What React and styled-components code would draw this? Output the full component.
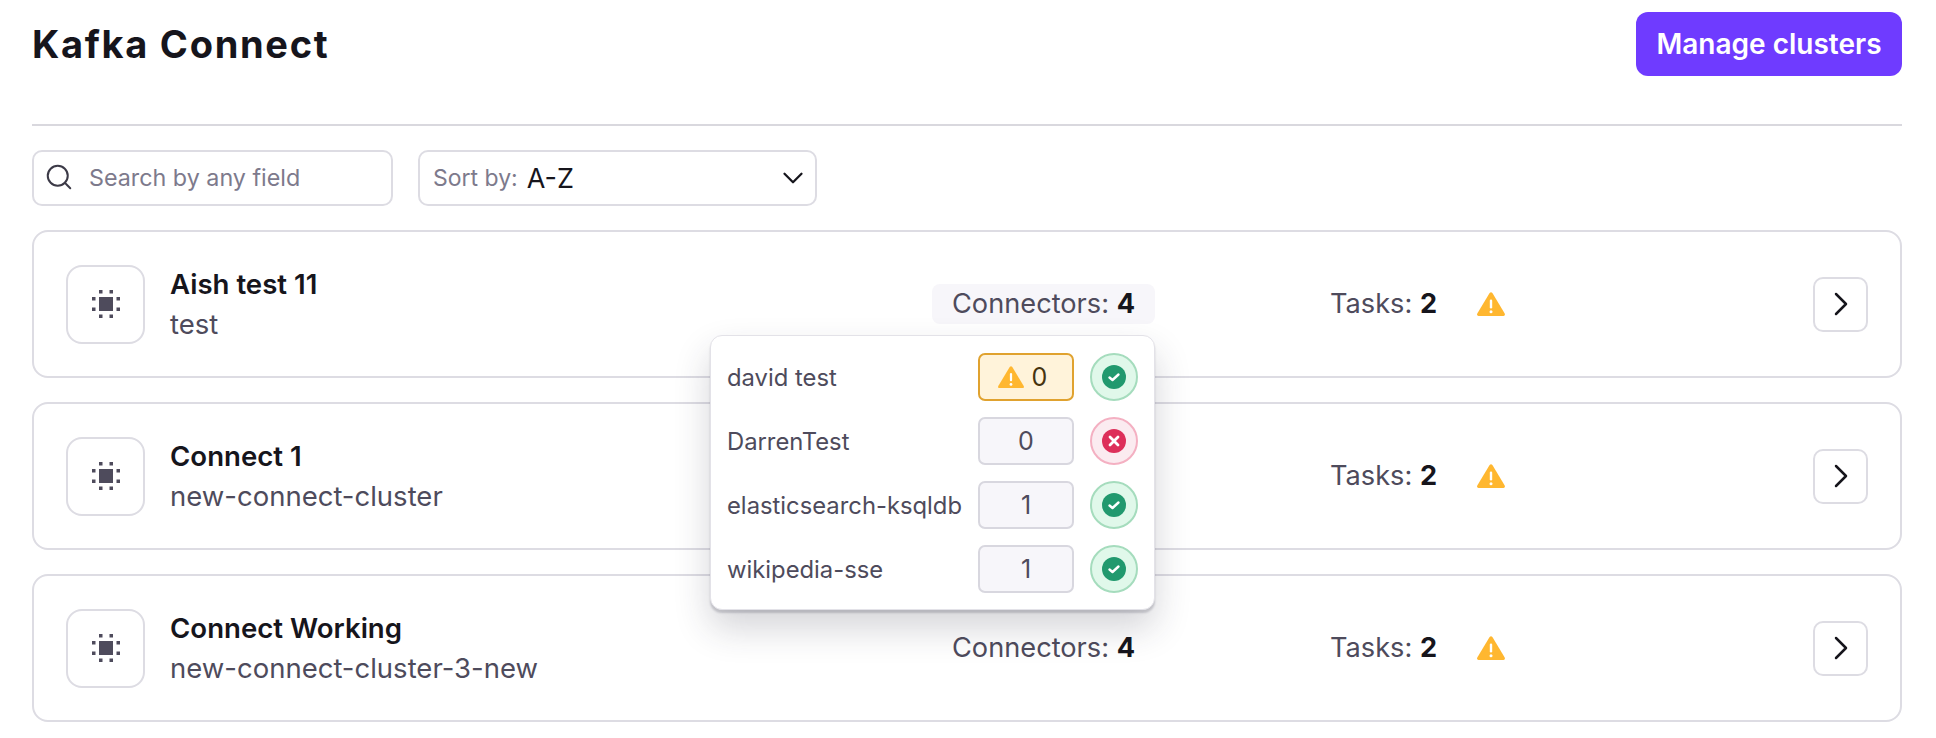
import React from 'react';
import styled, { createGlobalStyle } from 'styled-components';
import { Search, ChevronDown, ChevronRight } from 'lucide-react';

const GlobalStyle = createGlobalStyle`
    html, body {
        margin: 0;
        padding: 0;
        background: #fff;
        font-family: Inter, "Liberation Sans", sans-serif;
    }
    * {
        box-sizing: border-box;
    }
`

const Page = styled.div`
    width: 1936px;
    padding: 12px 34px 0 32px;
`

const Header = styled.div`
    display: flex;
    justify-content: space-between;
    align-items: center;
    height: 114px;
    padding-bottom: 48px;
    border-bottom: 2px solid #d9d8de;
`

const Title = styled.h1`
    margin: 0;
    font-size: 38px;
    font-weight: 700;
    letter-spacing: 1.7px;
    color: #16151c;
`

const ManageButton = styled.button`
    height: 64px;
    width: 266px;
    border: none;
    border-radius: 12px;
    background: #6f3bff;
    color: #fff;
    font-family: inherit;
    font-size: 28px;
    font-weight: 600;
`

const Toolbar = styled.div`
    display: flex;
    gap: 25px;
    margin: 24px 0 24px;
`

const SearchBox = styled.label`
    display: flex;
    align-items: center;
    gap: 15px;
    width: 361px;
    height: 56px;
    padding: 0 10px 2px;
    border: 2px solid #dddce3;
    border-radius: 10px;
    color: #3c3a47;
`

const SearchInput = styled.input`
    flex: 1;
    min-width: 0;
    padding: 0;
    border: none;
    outline: none;
    font-family: inherit;
    font-size: 23.3px;
    color: #16151c;

    &::placeholder {
        color: #7d7a8c;
        opacity: 1;
    }
`

const SortBox = styled.div`
    display: flex;
    align-items: center;
    width: 399px;
    height: 56px;
    padding: 0 5px 0 13px;
    border: 2px solid #dddce3;
    border-radius: 10px;
    font-size: 23px;
    color: #16151c;
`

const SortLabel = styled.span`
    margin-right: 9px;
    color: #7d7a8c;
`

const SortValue = styled.span`
    flex: 1;
    font-size: 27px;
`

const List = styled.div`
    display: flex;
    flex-direction: column;
    gap: 24px;
`

const Card = styled.div`
    display: grid;
    grid-template-columns: 866px 398px 1fr auto;
    align-items: center;
    height: 148px;
    padding: 0 32px;
    border: 2px solid #dddce3;
    border-radius: 16px;
`

const Identity = styled.div`
    display: flex;
    align-items: center;
    gap: 25px;
`

const IconBox = styled.div`
    display: flex;
    align-items: center;
    justify-content: center;
    width: 79px;
    height: 79px;
    border: 2px solid #dddce3;
    border-radius: 16px;
`

const Names = styled.div`
    display: flex;
    flex-direction: column;
    gap: 8px;
`

const Name = styled.div`
    font-size: 27.6px;
    font-weight: 600;
    line-height: 32px;
    color: #16151c;
`

const SubName = styled.div`
    font-size: 27.5px;
    line-height: 32px;
    color: #4e4b5c;
`

const ConnectorsCell = styled.div`
    position: relative;
    justify-self: start;
`

const Stat = styled.div`
    font-size: 27.2px;
    line-height: 40px;
    white-space: nowrap;
    color: #4e4b5c;

    b {
        font-weight: 700;
        color: #16151c;
    }
`

const ConnectorsStat = styled(Stat)`
    width: 223px;
    height: 40px;
    padding-left: 20px;
    border-radius: 8px;
    background: ${props => (props.$active ? '#f7f6fa' : 'transparent')};
`

const TasksCell = styled.div`
    display: flex;
    align-items: center;
    gap: 40px;
`

const ArrowButton = styled.button`
    display: flex;
    align-items: center;
    justify-content: center;
    width: 55px;
    height: 55px;
    padding: 0;
    border: 2px solid #dddce3;
    border-radius: 10px;
    background: #fff;
    color: #16151c;
`

const Popover = styled.div`
    position: absolute;
    top: 51px;
    right: 0;
    z-index: 2;
    display: flex;
    flex-direction: column;
    gap: 16px;
    width: 445px;
    padding: 17px 16px 16px 16px;
    border: 1px solid #e3e2e8;
    border-radius: 12px;
    background: #fff;
    box-shadow: 0 3px 2px rgba(40, 38, 60, 0.2), 0 18px 36px rgba(40, 38, 60, 0.2);
`

const PopoverRow = styled.div`
    display: flex;
    align-items: center;
    height: 48px;
`

const ConnectorName = styled.div`
    flex: 1;
    font-size: 23.8px;
    color: #4e4b5c;
`

const CountPill = styled.div`
    display: flex;
    align-items: center;
    justify-content: center;
    gap: 8px;
    width: 96px;
    height: 48px;
    margin-right: 16px;
    padding-right: ${props => (props.$warn ? '7px' : '0')};
    border: 2px solid ${props => (props.$warn ? '#e0a22f' : '#d8d7df')};
    border-radius: 7px;
    background: ${props => (props.$warn ? '#fff3da' : '#f7f6fa')};
    color: ${props => (props.$warn ? '#46330f' : '#4e4b5c')};
    font-size: 25px;
`

const StatusRing = styled.div`
    display: flex;
    align-items: center;
    justify-content: center;
    width: 48px;
    height: 48px;
    border: 2px solid ${props => (props.$ok ? '#a5dcbd' : '#f4b0c2')};
    border-radius: 50%;
    background: ${props => (props.$ok ? '#e0f8ea' : '#fbebf0')};
`

const ChipIcon = () => (
    <svg width="28" height="28" viewBox="0 0 28 28" fill="#4e4b5c">
        <rect x="7" y="7" width="14" height="14" />
        <rect x="7" y="0" width="3.500" height="3.500" />
        <rect x="17.500" y="0" width="3.500" height="3.500" />
        <rect x="7" y="24.500" width="3.500" height="3.500" />
        <rect x="17.500" y="24.500" width="3.500" height="3.500" />
        <rect x="0" y="7" width="3.500" height="3.500" />
        <rect x="0" y="17.500" width="3.500" height="3.500" />
        <rect x="24.500" y="7" width="3.500" height="3.500" />
        <rect x="24.500" y="17.500" width="3.500" height="3.500" />
    </svg>
)

const WarnIcon = ({size}) => (
    <svg width={size} height={size * 0.86} viewBox="0 0 28 24">
        <path d="M12.600 1 Q14 -0.500 15.400 1 L27.700 21.500 Q28.500 24 26 24 L2 24 Q-0.500 24 0.300 21.500 Z" fill="#ffb730" />
        <rect x="12.800" y="7.500" width="2.400" height="9" rx="1.200" fill="#fff" />
        <circle cx="14" cy="19.800" r="1.500" fill="#fff" />
    </svg>
)

const StatusIcon = ({ok}) => (
    <svg width="24" height="24" viewBox="0 0 24 24">
        <circle cx="12" cy="12" r="12" fill={ok ? '#21996e' : '#dd2f5a'} />
        {ok
            ? <path d="M7.500 12.500 L10.500 15 L16.500 9.500" fill="none" stroke="#fff" strokeWidth="2.400" strokeLinecap="round" strokeLinejoin="round" />
            : <path d="M8 8 L16 16 M16 8 L8 16" fill="none" stroke="#fff" strokeWidth="2.800" strokeLinecap="round" />}
    </svg>
)

const clusters = [
    {name: 'Aish test 11', sub: 'test', open: true},
    {name: 'Connect 1', sub: 'new-connect-cluster'},
    {name: 'Connect Working', sub: 'new-connect-cluster-3-new'},
]

const connectors = [
    {name: 'david test', count: 0, warn: true, ok: true},
    {name: 'DarrenTest', count: 0, ok: false},
    {name: 'elasticsearch-ksqldb', count: 1, ok: true},
    {name: 'wikipedia-sse', count: 1, ok: true},
]

export default function App() {
    return (
        <Page>
            <GlobalStyle />
            <Header>
                <Title>Kafka Connect</Title>
                <ManageButton>Manage clusters</ManageButton>
            </Header>
            <Toolbar>
                <SearchBox>
                    <Search size={30} strokeWidth={1.6} />
                    <SearchInput placeholder="Search by any field" />
                </SearchBox>
                <SortBox>
                    <SortLabel>Sort by:</SortLabel>
                    <SortValue>A-Z</SortValue>
                    <ChevronDown size={34} strokeWidth={1.6} />
                </SortBox>
            </Toolbar>
            <List>
                {clusters.map(cluster => (
                    <Card key={cluster.name}>
                        <Identity>
                            <IconBox>
                                <ChipIcon />
                            </IconBox>
                            <Names>
                                <Name>{cluster.name}</Name>
                                <SubName>{cluster.sub}</SubName>
                            </Names>
                        </Identity>
                        <ConnectorsCell>
                            <ConnectorsStat $active={cluster.open}>
                                Connectors: <b>4</b>
                            </ConnectorsStat>
                            {cluster.open && (
                                <Popover>
                                    {connectors.map(item => (
                                        <PopoverRow key={item.name}>
                                            <ConnectorName>{item.name}</ConnectorName>
                                            <CountPill $warn={item.warn}>
                                                {item.warn && <WarnIcon size={26} />}
                                                {item.count}
                                            </CountPill>
                                            <StatusRing $ok={item.ok}>
                                                <StatusIcon ok={item.ok} />
                                            </StatusRing>
                                        </PopoverRow>
                                    ))}
                                </Popover>
                            )}
                        </ConnectorsCell>
                        <TasksCell>
                            <Stat>Tasks: <b>2</b></Stat>
                            <WarnIcon size={28} />
                        </TasksCell>
                        <ArrowButton>
                            <ChevronRight size={40} strokeWidth={1.5} />
                        </ArrowButton>
                    </Card>
                ))}
            </List>
        </Page>
    );
}
